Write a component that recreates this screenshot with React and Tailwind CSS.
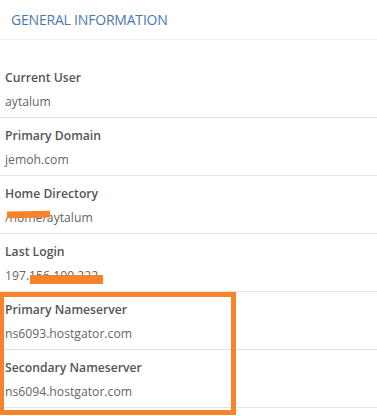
import React from 'react';

const rows = [
  { label: 'Current User', value: 'aytalum' },
  { label: 'Primary Domain', value: 'jemoh.com' },
  { label: 'Home Directory', value: '/home/aytalum', mark: 'home' },
  { label: 'Last Login', value: '197.156.100.222', mark: 'login' },
];

const boxed = [
  { label: 'Primary Nameserver', value: 'ns6093.hostgator.com' },
  { label: 'Secondary Nameserver', value: 'ns6094.hostgator.com' },
];

const Row = ({ label, value, mark }) => (
  <div className="h-[58px] border-b border-[#e2e2e2] px-[5px] pt-[8px] flex flex-col gap-[4px]">
    <div className="text-[12.2px] leading-[20px] font-semibold text-[#555]">{label}</div>
    <div className="relative text-[12.2px] leading-[20px] text-[#666]">
      {value}
      {mark === 'home' && (
        <div className="absolute left-[2px] top-[3px] w-[43px] h-[7px] bg-[#f7822c] -rotate-1" />
      )}
      {mark === 'login' && (
        <div className="absolute left-[25px] top-[9px] w-[73px] h-[9px] bg-[#f7822c]" />
      )}
    </div>
  </div>
);

const App = () => {
  return (
    <div className="w-[377px] h-[416px] bg-white overflow-hidden font-['Open_Sans',sans-serif]">
      <div className="h-[40px] border-b border-[#eee] px-[11px] flex items-center text-[14px] text-[#4a78b0] tracking-[-0.2px]">
        GENERAL INFORMATION
      </div>
      <div className="pt-[20px]">
        {rows.map((r) => (
          <Row key={r.label} {...r} />
        ))}
        <div className="relative">
          {boxed.map((r) => (
            <Row key={r.label} {...r} />
          ))}
          <div className="absolute top-0 left-[-1px] w-[237px] h-[123px] border-[5px] border-[#f7842d] pointer-events-none" />
        </div>
      </div>
    </div>
  );
};

export default App;
